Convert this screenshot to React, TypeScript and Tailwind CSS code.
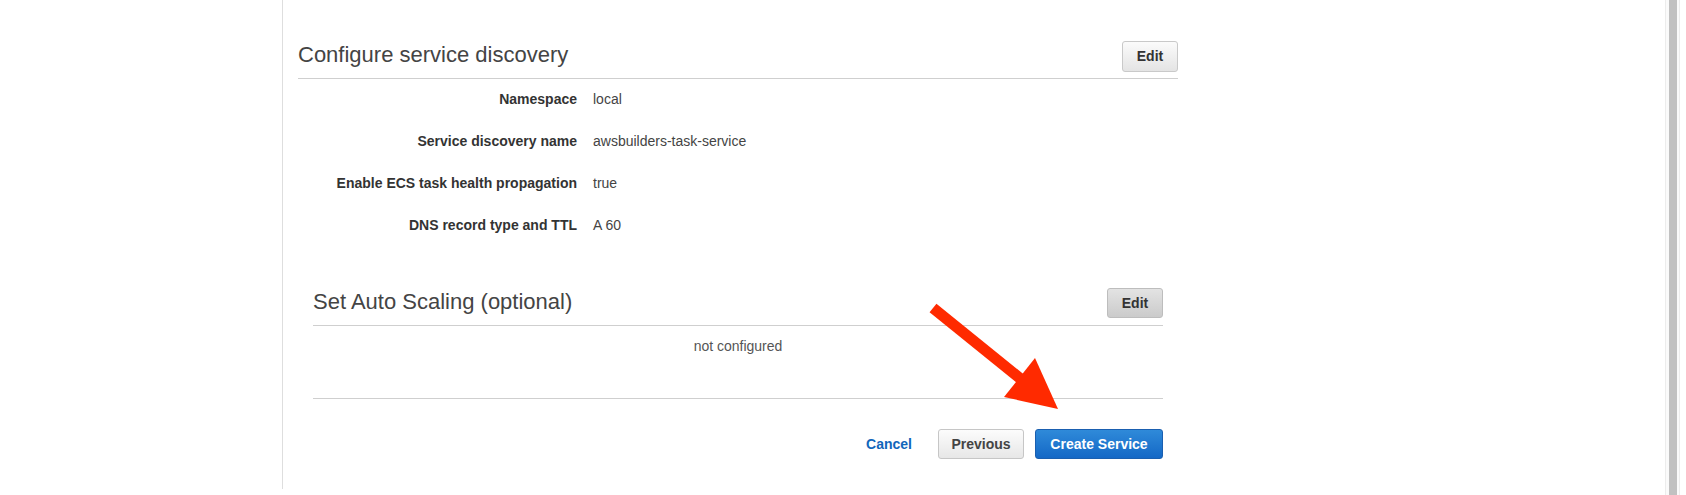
import React from "react";

const rows = [
  { label: "Namespace", value: "local" },
  { label: "Service discovery name", value: "awsbuilders-task-service" },
  { label: "Enable ECS task health propagation", value: "true" },
  { label: "DNS record type and TTL", value: "A 60" },
];

function EditButton({ pressed }: { pressed?: boolean }) {
  return (
    <button
      className={`w-[56px] rounded-[3px] border text-[14px] font-bold text-[#333] ${
        pressed
          ? "h-[30px] border-[#bdbdbd] bg-gradient-to-b from-[#e3e3e3] to-[#cbcbcb]"
          : "h-[31px] border-[#c9c9c9] bg-gradient-to-b from-[#fbfbfb] to-[#e4e4e4]"
      }`}
    >
      Edit
    </button>
  );
}

export default function App() {
  return (
    <div className="relative flex h-[495px] w-[1686px] overflow-hidden bg-white font-['Liberation_Sans',Arial,sans-serif]">
      <div className="flex-1 pl-[282px]">
        <div className="h-[489px] w-[896px] border-l border-[#dedede] pl-[15px] pt-[41px]">
          {/* Configure service discovery */}
          <div className="w-[880px]">
            <div className="box-border flex h-[38px] items-start justify-between border-b border-[#cfcfcf]">
              <h2 className="text-[22px] leading-[28px] text-[#444]">Configure service discovery</h2>
              <EditButton />
            </div>
            {rows.map((r) => (
              <div key={r.label} className="flex h-[42px] items-center gap-[16px] pb-[3px] text-[14px] leading-[20px]">
                <div className="w-[279px] text-right font-bold text-[#333]">{r.label}</div>
                <div className="text-[#444]">{r.value}</div>
              </div>
            ))}
          </div>

          {/* Set Auto Scaling */}
          <div className="ml-[15px] mt-[41px] w-[850px]">
            <div className="box-border flex h-[38px] items-start justify-between border-b border-[#cfcfcf]">
              <h2 className="text-[22px] leading-[28px] text-[#444]">Set Auto Scaling (optional)</h2>
              <EditButton pressed />
            </div>
            <div className="box-border h-[73px] border-b border-[#cfcfcf] pt-[10px] text-center text-[14px] leading-[20px] text-[#555]">
              not configured
            </div>
            <div className="mt-[30px] flex items-center justify-end text-[14px] font-bold">
              <a className="mr-[26px] text-[#1166bb]">Cancel</a>
              <button className="h-[30px] w-[86px] rounded-[3px] border border-[#c6c6c6] bg-gradient-to-b from-[#fcfcfc] to-[#e7e7e7] text-[#444]">
                Previous
              </button>
              <button className="ml-[11px] h-[30px] w-[128px] rounded-[3px] border border-[#1a5fb0] bg-gradient-to-b from-[#2f8ad9] to-[#1468c6] text-white">
                Create Service
              </button>
            </div>
          </div>
        </div>
      </div>

      {/* scrollbar */}
      <div className="mr-[6px] flex w-[15px] justify-center border-x border-[#ececec] bg-[#fafafa]">
        <div className="h-full w-[8px] bg-[#c1c1c1]" />
      </div>

      {/* annotation arrow */}
      <svg className="pointer-events-none absolute left-0 top-0" width="1686" height="495">
        <line x1="933" y1="308" x2="1022" y2="380" stroke="#ff2a00" strokeWidth="11" />
        <polygon points="1004,397 1035,358 1058,409" fill="#ff2a00" />
      </svg>
    </div>
  );
}
